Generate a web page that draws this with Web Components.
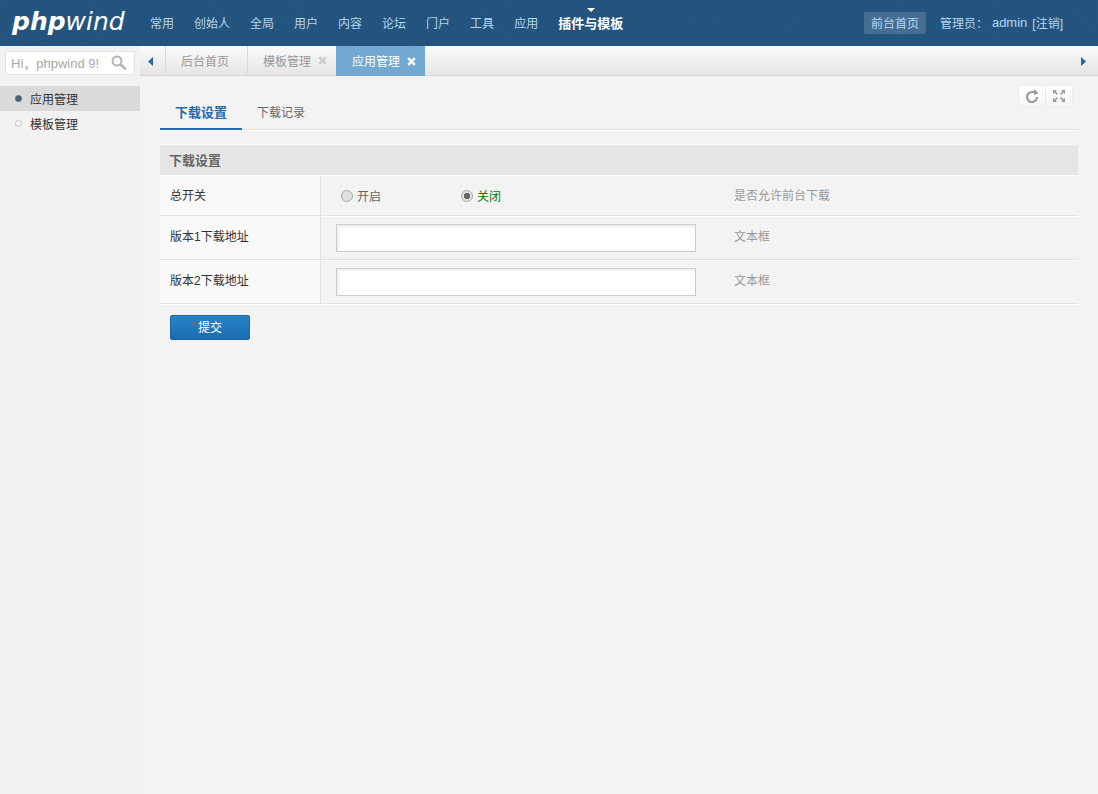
<!DOCTYPE html>
<html lang="zh-CN">
<head>
<meta charset="utf-8">
<title>phpwind 后台管理</title>
<style>
  html, body { height: 100%; }
  body { margin: 0; background: #f3f3f3; color: #333; font: 12px/18px "Liberation Sans", "Noto Sans CJK SC", sans-serif; }
</style>
</head>
<body>
<pw-app>
  <pw-header slot="header">
    <pw-nav-item>常用</pw-nav-item>
    <pw-nav-item>创始人</pw-nav-item>
    <pw-nav-item>全局</pw-nav-item>
    <pw-nav-item>用户</pw-nav-item>
    <pw-nav-item>内容</pw-nav-item>
    <pw-nav-item>论坛</pw-nav-item>
    <pw-nav-item>门户</pw-nav-item>
    <pw-nav-item>工具</pw-nav-item>
    <pw-nav-item>应用</pw-nav-item>
    <pw-nav-item current>插件与模板</pw-nav-item>
  </pw-header>
  <pw-sidebar slot="sidebar">
    <pw-menu-item current>应用管理</pw-menu-item>
    <pw-menu-item>模板管理</pw-menu-item>
  </pw-sidebar>
  <pw-tabbar slot="tabs">
    <pw-tab>后台首页</pw-tab>
    <pw-tab closable>模板管理</pw-tab>
    <pw-tab closable current>应用管理</pw-tab>
  </pw-tabbar>
  <pw-subnav>
    <pw-subnav-item current>下载设置</pw-subnav-item>
    <pw-subnav-item>下载记录</pw-subnav-item>
    <pw-tools slot="tools"></pw-tools>
  </pw-subnav>
  <pw-settings></pw-settings>
</pw-app>

<script>
function define(name, html) {
  const template = document.createElement('template');
  template.innerHTML = html;
  customElements.define(name, class extends HTMLElement {
    constructor() {
      super();
      this.attachShadow({ mode: 'open' }).append(template.content.cloneNode(true));
    }
  });
}

define('pw-app', `
<style>
  :host { display: grid; grid-template: auto auto 1fr / 140px minmax(0, 1fr); min-height: 100vh; }
  header { grid-column: 1 / 3; }
  aside { grid-row: 2 / 4; background: #f2f2f2; }
  main { padding: 10px 20px; }
</style>
<header><slot name="header"></slot></header>
<aside><slot name="sidebar"></slot></aside>
<slot name="tabs"></slot>
<main><slot></slot></main>`);

define('pw-header', `
<style>
  :host { display: flex; align-items: center; height: 46px; color: #b4d6f0;
    background: repeating-linear-gradient(45deg, #1d4a7026 0 1px, #0000 1px 5px), repeating-linear-gradient(-45deg, #1d4a7026 0 1px, #0000 1px 5px), #24557f; }
  a { color: inherit; text-decoration: none; }
  .logo { flex: 0 0 128px; padding-left: 12px; box-sizing: border-box; margin-right: 12px; color: #fff; line-height: 44px; padding-bottom: 2px; font-family: "DejaVu Sans", sans-serif; font-size: 25px; font-style: italic; white-space: nowrap; }
  nav { display: flex; flex: 1; align-self: stretch; }
  .account { display: flex; align-items: center; padding-right: 35px; white-space: nowrap; }
  .account > * { padding-top: 2px; }
  .account > .home { padding: 3px 7px 1px; margin-right: 14px; border-radius: 2px; background: #466e94; }
  .account > .name { margin: 0 5px 0 4px; padding-top: 0; font-size: 13px; }
</style>
<a class="logo" href="#"><b>php</b><span>wind</span></a>
<nav><slot></slot></nav>
<div class="account"><a class="home" href="#">前台首页</a><span>管理员：</span><span class="name">admin</span><a href="#">[注销]</a></div>`);

define('pw-nav-item', `
<style>
  :host { display: flex; position: relative; white-space: nowrap; }
  a { display: flex; align-items: center; padding: 2px 10px 0; color: inherit; text-decoration: none; }
  :host([current]) a { color: #fff; font-weight: bold; font-size: 13px; }
  svg { display: none; position: absolute; top: 8px; left: 50%; margin-left: -4px; }
  :host([current]) svg { display: block; }
</style>
<a href="#"><slot></slot></a><svg width="8" height="4" viewBox="0 0 8 4" fill="#fff"><path d="M0 0h8L4 4z"/></svg>`);

define('pw-sidebar', `
<style>
  :host { display: block; }
  form { display: flex; align-items: center; height: 22px; margin: 5px 5px 11px; border: 1px solid #e4e4e4; background: #fff; }
  input { flex: 1; min-width: 0; padding: 2px 0 0 5px; border: 0; outline: 0; background: none; font: inherit; font-size: 13px; }
  input::placeholder { color: #aaa99f; opacity: 1; }
  button { display: flex; padding: 0; margin-right: 7px; border: 0; background: none; }
</style>
<form><input type="text" aria-label="搜索" placeholder="Hi，phpwind 9!"><button type="button" aria-label="搜索"><svg width="16" height="16" viewBox="0 0 16 16" fill="none" stroke="#b5b5b5"><circle cx="6" cy="6" r="4.5" stroke-width="2"/><path d="M9.5 9.5l4.5 4" stroke-width="2.6" stroke-linecap="round"/></svg></button></form>
<nav><slot></slot></nav>`);

define('pw-menu-item', `
<style>
  :host { display: block; }
  :host([current]) { background: #dadada; }
  a { display: flex; align-items: center; gap: 8px; height: 25px; padding-left: 15px; color: #333; text-decoration: none; }
  i { box-sizing: border-box; width: 7px; height: 7px; border: 1px solid #c4c4c4; border-radius: 50%; background: #f8f8f8; }
  span { padding-top: 2px; }
  :host([current]) i { border-color: #4f6b85; background: #46627d; }
</style>
<a href="#"><i></i><span><slot></slot></span></a>`);

define('pw-tabbar', `
<style>
  :host { display: flex; height: 29px; border-bottom: 1px solid #d5d5d5; background: linear-gradient(#fafafa, #e5e5e5); }
  button { display: flex; align-items: center; padding: 2px 12px 0 8px; border: 0; background: none; }
  .tabs { display: flex; flex: 1; border-left: 1px solid #d9d9d9; }
</style>
<button type="button" aria-label="向左"><svg width="5" height="9" viewBox="0 0 5 9" fill="#2267ad"><path d="M5 0v9L0 4.5z"/></svg></button>
<div class="tabs"><slot></slot></div>
<button type="button" aria-label="向右"><svg width="5" height="9" viewBox="0 0 5 9" fill="#2267ad"><path d="M0 0v9l5-4.5z"/></svg></button>`);

define('pw-tab', `
<style>
  :host { display: flex; align-items: center; padding: 0 18px 0 15px; border-right: 1px solid #d9d9d9; color: #999; white-space: nowrap; }
  :host([closable]) { padding-right: 9px; border-right: 0; }
  :host([current]) { background: #72a8d1; color: #fff; margin-bottom: -1px; border-left: 1px solid #72a8d1; }
  a { padding-top: 2px; color: inherit; text-decoration: none; }
  button { display: none; margin-left: 7px; padding: 0; border: 0; background: none; color: #ccc; }
  :host([closable]) button { display: flex; }
  :host([current]) button { color: #fff; }
</style>
<a href="#"><slot></slot></a><button type="button" aria-label="关闭标签"><svg width="9" height="9" viewBox="0 0 9 9" stroke="currentColor" stroke-width="2.5"><path d="M1.2 1.2l6.6 6.6M7.8 1.2L1.2 7.8"/></svg></button>`);

define('pw-subnav', `
<style>
  :host { display: flex; justify-content: space-between; align-items: flex-start; height: 43px; margin-bottom: 16px; border-bottom: 1px solid #e1e1e1; box-shadow: 0 1px #fff; }
  nav { display: flex; height: 44px; }
  ::slotted([slot="tools"]) { margin-right: 6px; }
</style>
<nav><slot></slot></nav><slot name="tools"></slot>`);

define('pw-subnav-item', `
<style>
  :host { display: flex; }
  a { display: flex; align-items: flex-end; padding: 0 15px 6px; border-bottom: 2px solid transparent; color: #666; text-decoration: none; }
  :host([current]) a { border-color: #266aae; color: #266aae; font-weight: bold; font-size: 13px; }
</style>
<a href="#"><slot></slot></a>`);

define('pw-tools', `
<style>
  :host { display: flex; gap: 1px; background: #e9e9e9; box-shadow: 0 0 0 1px #ededed; }
  button { display: flex; align-items: center; justify-content: center; width: 26px; height: 20px; padding: 0; border: 0; background: linear-gradient(#fff, #f5f5f5); }
</style>
<button type="button" aria-label="刷新"><svg width="14" height="14" viewBox="0 0 14 14"><path d="M12 8A5 5 0 1 1 7.2 3H9.5" fill="none" stroke="#999" stroke-width="2.2"/><path d="M9 0l4 3.4v.9L9 6z" fill="#999"/></svg></button>
<button type="button" aria-label="全屏"><svg width="12" height="12" viewBox="0 0 12 12" fill="#999" stroke="#999" stroke-width="1.6"><g stroke="none"><path d="M0 0h4L0 4zM12 0v4L8 0zM0 12V8l4 4zM12 12H8l4-4z"/></g><path d="M1 1l3.4 3.4M11 1L7.6 4.4M1 11l3.4-3.4M11 11L7.6 7.6"/></svg></button>`);

define('pw-settings', `
<style>
  :host { display: block; }
  table { width: 100%; table-layout: fixed; border-collapse: separate; border-spacing: 0; text-align: left; box-shadow: 0 1px #fff; }
  .label { width: 161px; }
  .field { width: 398px; }
  thead th { height: 28px; padding: 0 9px; border-top: 1px solid #dcdcdc; background: #e5e5e5; color: #666; font-size: 13px; }
  tbody th, tbody td { padding: 7px 15px; border-top: 1px solid #fff; border-bottom: 1px solid #e2e2e2; vertical-align: top; line-height: 24px; }
  tbody th { padding: 8px 10px 6px; border-right: 1px solid #e2e2e2; background: #f9f9f9; font-weight: normal; }
  tbody .hint { padding-top: 8px; padding-bottom: 6px; color: #999; }
  .choices { display: flex; height: 25px; color: #666; }
  label { display: block; }
  .choices label { display: flex; align-items: center; width: 120px; }
  .choices label.on { color: #008000; }
  .choices span { padding-top: 2px; }
  input[type="radio"] { appearance: none; box-sizing: border-box; width: 12px; height: 12px; margin: 0 4px 0 5px; border: 1px solid #aaa; border-radius: 50%; background: #e0e0e0; }
  input[type="radio"]:checked { background: radial-gradient(circle, #666 0 3px, #e3e3e3 3px); }
  input[type="text"] { display: block; box-sizing: border-box; width: 360px; height: 28px; padding: 4px; border: 1px solid #ccc; background: #fff; box-shadow: inset 2px 2px 2px #f0f0f0; font: inherit; }
  .submit { width: 80px; height: 25px; margin: 11px 10px 0; padding: 0; border: 1px solid #1868ae; border-radius: 2px; background: linear-gradient(#2a83c7, #1a6cb0); color: #fff; font: inherit; }
</style>
<form>
<table>
  <colgroup><col class="label"><col class="field"><col></colgroup>
  <thead><tr><th colspan="3">下载设置</th></tr></thead>
  <tbody>
    <tr><th scope="row" id="switch">总开关</th>
      <td><div class="choices" role="radiogroup" aria-labelledby="switch"><label><input type="radio" name="switch"><span>开启</span></label><label class="on"><input type="radio" name="switch" checked><span>关闭</span></label></div></td>
      <td class="hint">是否允许前台下载</td></tr>
    <tr><th scope="row"><label for="url1">版本1下载地址</label></th><td><input type="text" id="url1"></td><td class="hint">文本框</td></tr>
    <tr><th scope="row"><label for="url2">版本2下载地址</label></th><td><input type="text" id="url2"></td><td class="hint">文本框</td></tr>
  </tbody>
</table>
<button class="submit" type="button">提交</button>
</form>`);
</script>
</body>
</html>
